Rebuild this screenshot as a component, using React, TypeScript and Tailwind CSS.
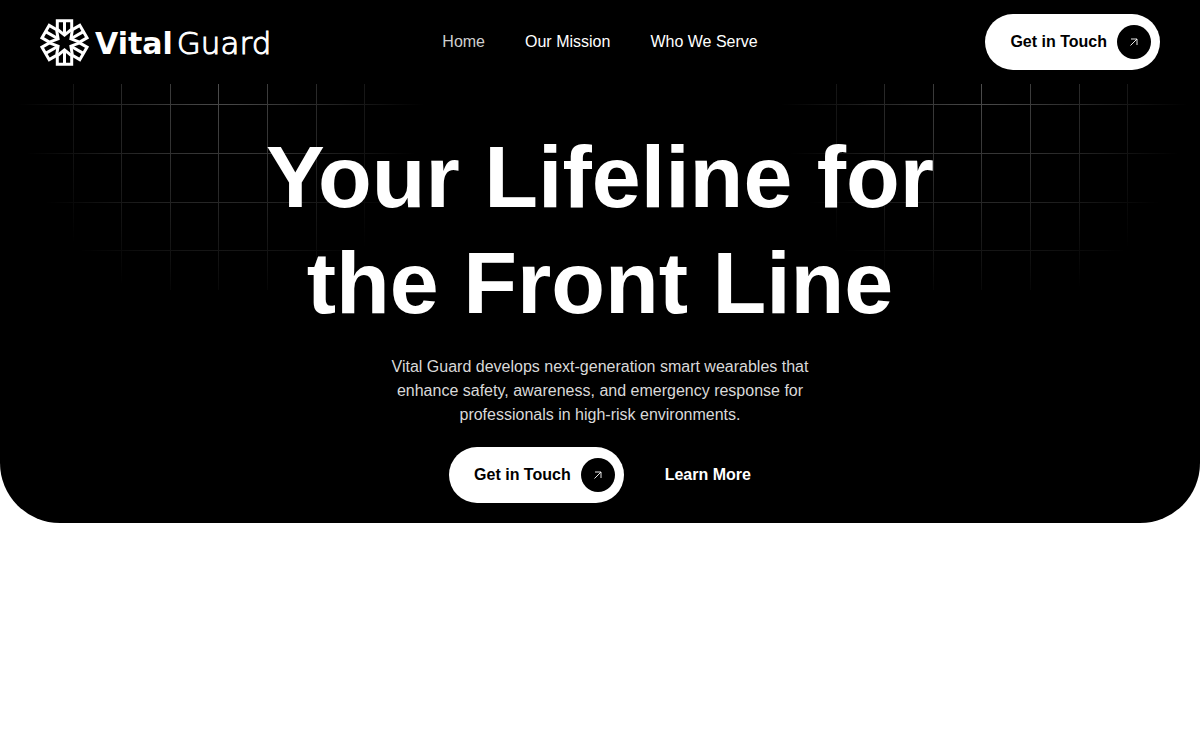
const NAV_LINKS = [
  { label: "Home", href: "#home", className: "text-[#cfcfcf]" },
  { label: "Our Mission", href: "#mission", className: "text-white" },
  { label: "Who We Serve", href: "#serve", className: "text-white" },
];

const PETAL_ANGLES = [0, 60, 120, 180, 240, 300];
const GRID_COLUMNS = [73, 121, 170, 218, 267, 316, 364];
const GRID_ROWS = [20, 69, 118, 166];

const LogoMark = () => (
  <svg viewBox="-24.5 -24.5 49 48" className="h-12 w-[49px]" fill="none" aria-hidden="true">
    {PETAL_ANGLES.map((angle) => (
      <g key={angle} transform={`rotate(${angle})`} stroke="white" strokeWidth="3">
        <path d="M-7.2 -13.3V-21.8H7.2V-13.3L0 -7.4Z" />
        <path d="M0 -21.8V-7.4" />
      </g>
    ))}
  </svg>
);

const Logo = () => (
  <a
    href="#home"
    aria-label="Vital Guard"
    className="flex items-center gap-1.5 justify-self-start font-['DejaVu_Sans',sans-serif] text-[30px] leading-8 text-white"
  >
    <LogoMark />
    <span className="flex items-baseline gap-1 pt-0.5">
      <span className="font-bold">Vital</span>
      <span className="text-[31px] font-extralight [-webkit-text-stroke:1px_white]">Guard</span>
    </span>
  </a>
);

const ContactButton = () => (
  <button
    type="button"
    className="flex h-14 items-center gap-2.5 rounded-full bg-white pr-[9px] pl-[25px] font-bold text-black"
  >
    Get in Touch
    <span className="flex size-[34px] items-center justify-center rounded-full bg-black">
      <svg viewBox="0 0 8 8" className="size-2" fill="none" stroke="white" strokeWidth="0.9" aria-hidden="true">
        <path d="M0.5 7.5L7 1M1 1H7V7" />
      </svg>
    </span>
  </button>
);

const GridBackdrop = ({ id }: { id: string }) => (
  <svg viewBox="0 0 437 220" className="h-[220px] w-[437px]" aria-hidden="true">
    <defs>
      <radialGradient
        id={`${id}-fade`}
        gradientUnits="userSpaceOnUse"
        cx="0"
        cy="0"
        r="1"
        gradientTransform="translate(221 0) scale(204 230)"
      >
        <stop offset="0" stopColor="white" />
        <stop offset="1" stopColor="black" />
      </radialGradient>
      <mask id={`${id}-mask`} maskUnits="userSpaceOnUse" x="0" y="0" width="437" height="220">
        <rect width="437" height="220" fill={`url(#${id}-fade)`} />
      </mask>
    </defs>
    <g fill="#4e4e4e" mask={`url(#${id}-mask)`}>
      {GRID_COLUMNS.map((x) => (
        <rect key={x} x={x} y="0" width="1" height="206" />
      ))}
      {GRID_ROWS.map((y) => (
        <rect key={y} x="0" y={y} width="437" height="1" />
      ))}
    </g>
  </svg>
);

const Header = () => (
  <header className="grid grid-cols-[1fr_auto_1fr] items-center px-10 py-3.5">
    <Logo />
    <nav aria-label="Main" className="flex gap-10">
      {NAV_LINKS.map(({ label, href, className }) => (
        <a key={label} href={href} className={className}>
          {label}
        </a>
      ))}
    </nav>
    <div className="justify-self-end">
      <ContactButton />
    </div>
  </header>
);

const Hero = () => (
  <section className="relative flex flex-col items-center px-10 pt-10 pb-5 text-center">
    <div className="absolute inset-x-0 top-0 flex justify-between overflow-hidden">
      <GridBackdrop id="left" />
      <GridBackdrop id="right" />
    </div>
    <h1 className="relative max-w-[720px] text-[88px] leading-[106px] font-bold text-white">
      Your Lifeline for the Front Line
    </h1>
    <p className="relative mt-[19px] max-w-[440px] text-[#d9d9d9]">
      Vital Guard develops next-generation smart wearables that enhance safety, awareness, and
      emergency response for professionals in high-risk environments.
    </p>
    <div className="relative mt-5 flex items-center gap-[41px]">
      <ContactButton />
      <a href="#mission" className="font-bold text-white">
        Learn More
      </a>
    </div>
  </section>
);

const App = () => (
  <div className="min-h-screen bg-white font-['Liberation_Sans',Arial,sans-serif] text-base">
    <div className="rounded-b-[60px] bg-black">
      <Header />
      <Hero />
    </div>
  </div>
);

export default App;
